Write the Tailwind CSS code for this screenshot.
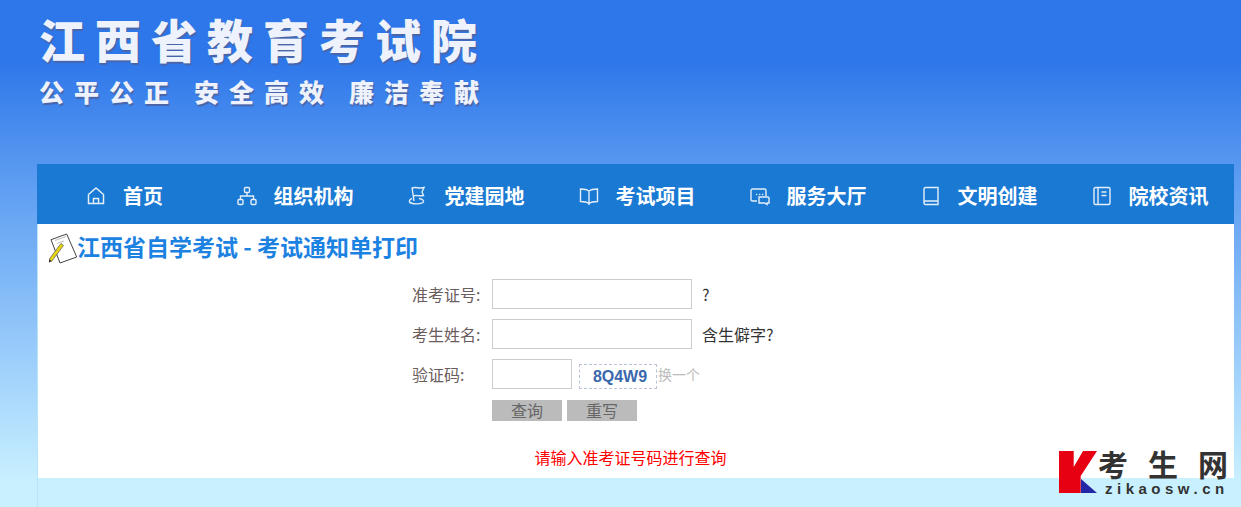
<!DOCTYPE html>
<html lang="zh-CN">
<head>
  <meta charset="UTF-8">
  <title>江西省自学考试 - 考试通知单打印</title>
  <script src="https://cdn.jsdelivr.net/npm/@tailwindcss/browser@4"></script>
</head>
<body class="relative h-[507px] overflow-hidden bg-gradient-to-b from-[#2e77ea] from-[12%] via-[#5b9bf1] via-[35%] to-[#c9f0ff] to-[95%] font-['Noto_Sans_CJK_SC','Liberation_Sans',sans-serif]">

  <!-- banner -->
  <header class="h-[164px] pl-[39px] pt-[7px] text-[#edf2fc] font-black [text-shadow:1px_2px_1px_#4a64a8]">
    <div class="text-[46px] leading-[62px] tracking-[10px] whitespace-nowrap">江西省教育考试院</div>
    <div class="mt-[7px] flex gap-[15px] text-[25px] leading-[30px] tracking-[10px] whitespace-nowrap">
      <span>公平公正</span>
      <span>安全高效</span>
      <span>廉洁奉献</span>
    </div>
  </header>

  <main class="ml-[37px] w-[1197px]">
    <!-- nav -->
    <nav class="grid h-[60px] grid-cols-7 bg-[#1a79d2] pt-[3px] text-[20px] font-bold text-white">
      <a class="flex items-center justify-center gap-[17px] pl-[4px]">
        <svg class="h-5 w-5" viewBox="0 0 20 20" fill="none" stroke="#e4eefa" stroke-width="1.5"><path d="M2.5 8.500 10 2l7.500 6.500v9h-15zM7.500 17.500v-5h5v5"/></svg>
        <span>首页</span>
      </a>
      <a class="flex items-center justify-center gap-[17px] pl-[3px]">
        <svg class="h-5 w-5" viewBox="0 0 20 20" fill="none" stroke="#e4eefa" stroke-width="1.4"><rect x="7.500" y="1.500" width="5" height="5" rx="1"/><rect x="1" y="13.500" width="5" height="5" rx="1"/><rect x="14" y="13.500" width="5" height="5" rx="1"/><path d="M10 6.500V10M3.500 13.500V10h13v3.500"/></svg>
        <span>组织机构</span>
      </a>
      <a class="flex items-center justify-center gap-[17px] pl-[3px]">
        <svg class="h-5 w-5" viewBox="0 0 20 20" fill="none" stroke="#e4eefa" stroke-width="1.4"><path d="M4 1.500 6 15M4 2c4-1.500 7 1 12-.5L14 6l1.500 3.500c-4.500 1-7.500-1-10.300.5M4 12.500c-3 1-3.500 4-1 4.500 4 1.500 10 1 12-.5 1.500-1.500 0-3.500-4-4"/></svg>
        <span>党建园地</span>
      </a>
      <a class="flex items-center justify-center gap-[17px] pl-[3px]">
        <svg class="h-5 w-5" viewBox="0 0 20 20" fill="none" stroke="#e4eefa" stroke-width="1.4"><path d="M10 5C8 3.500 5 3 1.500 3v12.500c3.500 0 6.500.5 8.500 2 2-1.500 5-2 8.500-2V3C15 3 12 3.500 10 5zM10 5v14"/></svg>
        <span>考试项目</span>
      </a>
      <a class="flex items-center justify-center gap-[17px] pl-[3px]">
        <svg class="h-5 w-5" viewBox="0 0 20 20" fill="none" stroke="#e4eefa" stroke-width="1.4"><path d="M16 10V4.500A1.500 1.500 0 0 0 14.500 3h-12A1.500 1.500 0 0 0 1 4.500v9A1.500 1.500 0 0 0 2.500 15H7"/><path d="M9 11h9a1 1 0 0 1 1 1v5h-2v1.500L14.500 17H9z"/><path d="M6 8.500h1.300M9 8.500h1.300M12 8.500h1.300"/></svg>
        <span>服务大厅</span>
      </a>
      <a class="flex items-center justify-center gap-[17px] pl-[3px]">
        <svg class="h-5 w-5" viewBox="0 0 20 20" fill="none" stroke="#e4eefa" stroke-width="1.4"><path d="M3 16.500V3a1.500 1.500 0 0 1 1.500-1.500H17V15H4.500A1.500 1.500 0 0 0 3 16.500 1.500 1.500 0 0 0 4.500 18.500H17V15"/></svg>
        <span>文明创建</span>
      </a>
      <a class="flex items-center justify-center gap-[17px] pl-[3px]">
        <svg class="h-5 w-5" viewBox="0 0 20 20" fill="none" stroke="#e4eefa" stroke-width="1.4"><rect x="2" y="1.500" width="16" height="17" rx="1.500"/><path d="M6 1.500v17M9.500 6H14.500M9.500 9.500H14.500"/></svg>
        <span>院校资讯</span>
      </a>
    </nav>

    <!-- content -->
    <section class="h-[254px] border-l border-[#b9e3f7] bg-white pl-[10px] pt-[10px]">
      <h1 class="flex h-[30px] items-center text-[23px] font-bold text-[#1c82e2] whitespace-pre">
        <svg class="h-[32px] w-[30px] shrink-0" viewBox="0 0 30 32">
          <path d="M3 6.700 18.700 1 28.700 24 12 30z" fill="#fff" stroke="#444" stroke-width="1"/>
          <path d="M7 7.500 18 3.500M9 10.500l7-2.500" stroke="#aaa" stroke-width=".8"/>
          <path d="M1.300 26 13 10.500l2.500 2L3.500 28.500z" fill="#e8d410" stroke="#555" stroke-width=".7"/>
          <path d="M1.300 26 .8 29.500l2.700-1z" fill="#333"/>
        </svg>
        <span class="-ml-[1px] pb-[6px]">江西省自学考试 - 考试通知单打印</span>
      </h1>

      <form class="ml-[364px] mt-[15px] text-[16px] text-[#6b5d5d]">
        <div class="flex h-[30px] items-center">
          <label class="w-[80px] leading-[30px]">准考证号:</label>
          <input class="h-[30px] w-[200px] border border-[#ccc] bg-white">
          <span class="ml-[10px] text-[#333]">?</span>
        </div>
        <div class="mt-[10px] flex h-[30px] items-center">
          <label class="w-[80px] leading-[30px]">考生姓名:</label>
          <input class="h-[30px] w-[200px] border border-[#ccc] bg-white">
          <span class="ml-[10px] text-[#333]">含生僻字?</span>
        </div>
        <div class="mt-[10px] flex h-[30px] items-center">
          <label class="w-[80px] leading-[30px]">验证码:</label>
          <input class="h-[30px] w-[80px] border border-[#ccc] bg-white">
          <div class="ml-[7px] mt-[4px] flex h-[25px] w-[78px] items-center justify-center border border-dashed border-[#b8c4d4] pl-[4px] pt-[1px] font-['Liberation_Sans',sans-serif] text-[16px] font-bold text-[#3a68ad]">8Q4W9</div>
          <a class="ml-[1px] text-[14px] text-[#bbb]">换一个</a>
        </div>
        <div class="ml-[80px] mt-[11px] flex gap-[5px]">
          <button type="button" class="h-[21px] w-[70px] bg-[#bbb] text-[16px] leading-[21px] text-[#666]">查询</button>
          <button type="button" class="h-[21px] w-[70px] bg-[#bbb] text-[16px] leading-[21px] text-[#666]">重写</button>
        </div>
      </form>

      <p class="mt-[25px] pr-[21px] text-center text-[16px] leading-[22px] text-[#f00]">请输入准考证号码进行查询</p>
    </section>

    <div class="h-[29px] border-l border-[#b9e3f7] bg-[#c9f0ff]"></div>
  </main>

  <!-- watermark -->
  <div class="absolute left-[1059px] top-[448px] flex">
    <svg class="mt-[3px] h-[43px] w-[39px]" viewBox="0 0 39 43">
      <path d="M0 0h14.700v16L24 0h14L21.700 25v17H0z" fill="#e60012"/>
      <path d="M22 28 38 42H22z" fill="#2426a8"/>
    </svg>
    <div class="w-[130px] text-[#333]">
      <div class="flex h-[34px] justify-between text-[30px] font-bold leading-[30px]">
        <span>考</span>
        <span>生</span>
        <span>网</span>
      </div>
      <div class="pl-[7px] font-['Liberation_Sans',sans-serif] text-[15px] font-bold leading-[14px] tracking-[4.500px] whitespace-nowrap">zikaosw.cn</div>
    </div>
  </div>
</body>
</html>
